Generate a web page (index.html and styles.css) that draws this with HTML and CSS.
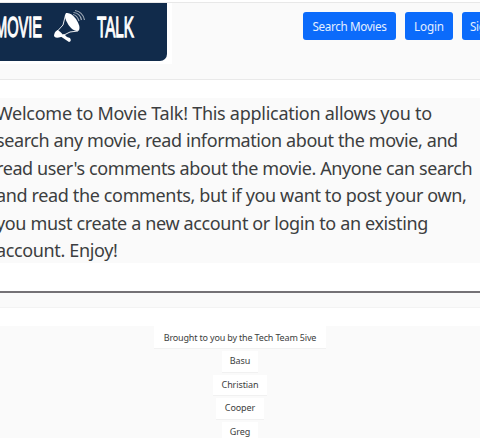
FILE: index.html
```html
<!DOCTYPE html>
<html lang="en">
<head>
<meta charset="utf-8">
<title>Movie Talk</title>
<link rel="stylesheet" href="styles.css">
</head>
<body>
<header class="header">
  <div class="logo">
    <svg class="logo-art" width="167" height="58" viewBox="0 0 167 58" role="img" aria-label="Movie Talk">
      <g class="logo-text">
        <text x="-5" y="34" textLength="47" lengthAdjust="spacingAndGlyphs">MOVIE</text>
        <text x="97" y="34" textLength="37" lengthAdjust="spacingAndGlyphs">TALK</text>
      </g>
      <g fill="#fff">
        <path d="M66 10Q71 9 76 16Q81 24 79 27.500Q74 29.500 68.500 22Q63 13 66 10Z"/>
        <path d="M57.500 27Q60 28 64 33L61 34Q55 36 54 33Q54 29 57.500 27Z"/>
        <path d="M60 33L64 31L67 34L70 35Q72 38 69 39L66 37Z"/>
      </g>
      <g fill="none" stroke="#fff">
        <path d="M65.500 12L63 22L57.500 28M78 28L70 29L62 33" stroke-width=".9"/>
        <path d="M73 11.500Q77 12 79 18M73.500 9.500Q80 10 81.500 17M75 7.500Q83 9 84.500 17" stroke-width="1.200" opacity=".6"/>
      </g>
    </svg>
  </div>
  <nav class="nav">
    <a class="btn btn-search">Search Movies</a>
    <a class="btn btn-login">Login</a>
    <a class="btn btn-signup">Sign Up</a>
  </nav>
</header>
<main class="intro">
  <p class="welcome">
    <span class="line">Welcome to Movie Talk! This application allows you to</span>
    <span class="line tight">search any movie, read information about the movie, and</span>
    <span class="line tight">read user's comments about the movie. Anyone can search</span>
    <span class="line snug">and read the comments, but if you want to post your own,</span>
    <span class="line snug">you must create a new account or login to an existing</span>
    <span class="line snug">account. Enjoy!</span>
  </p>
</main>
<div class="divider"></div>
<footer class="credits">
  <div class="credit team">Brought to you by the Tech Team 5ive</div>
  <div class="credit basu">Basu</div>
  <div class="credit christian">Christian</div>
  <div class="credit cooper">Cooper</div>
  <div class="credit greg">Greg</div>
</footer>
</body>
</html>
```
FILE: styles.css
```css
* { box-sizing: border-box; }
body {
  margin: 0;
  height: 438px;
  overflow: hidden;
  background: #fff;
  color: #3c3e40;
  font-family: "Noto Sans", "Open Sans", sans-serif;
}
.header {
  display: flex;
  justify-content: space-between;
  height: 78px;
  margin-top: 2px;
  overflow: hidden;
  border-top: 1px solid #e8e8e8;
  border-bottom: 1px solid #e9e9e9;
  background: #fafafa;
}
.logo {
  flex: none;
  width: 172px;
  height: 61px;
  background: #fff;
}
.logo-art {
  display: block;
  background: #112b4b;
  border-bottom-right-radius: 7px;
}
.logo-text {
  fill: #fff;
  stroke: #fff;
  stroke-width: 1.3px;
  font: 30px "Liberation Sans", sans-serif;
}
.nav {
  display: flex;
  flex: none;
  gap: 9px;
  width: 177px;
  padding-top: 9px;
}
.btn {
  flex: none;
  height: 28px;
  border-radius: 3px;
  background: #0b6bfb;
  color: #e4efff;
  font-size: 11.7px;
  line-height: 29px;
  letter-spacing: -.35px;
  text-align: center;
}
.btn-search { width: 93px; }
.btn-login { width: 48px; letter-spacing: -.15px; }
.btn-signup { width: 56px; }
.intro {
  height: 165px;
  margin-top: 18px;
  overflow: hidden;
  background: #fafafa;
}
.welcome {
  margin: 0 0 0 -4px;
  padding-top: 1.5px;
  font-size: 18px;
  letter-spacing: -.27px;
}
.line {
  display: block;
  height: 27.5px;
  line-height: 27.5px;
  white-space: nowrap;
}
.tight { letter-spacing: -.41px; }
.snug { letter-spacing: -.36px; }
.divider {
  height: 17px;
  margin-top: 28px;
  border-top: 2px solid #747276;
  border-bottom: 1px solid #f3f3f3;
  background: #fafafa;
}
.credits {
  display: flex;
  flex-direction: column;
  align-items: center;
  gap: 2px;
  height: 130px;
  margin-top: 18px;
  background: #fafafa;
}
.credit {
  flex: none;
  height: 21.5px;
  border-bottom: 1px solid #f1f1f1;
  background: #fff;
  font-size: 9px;
  line-height: 20px;
  letter-spacing: -.1px;
  text-align: center;
  white-space: nowrap;
}
.team { width: 172px; height: 23px; line-height: 23px; letter-spacing: -.17px; }
.basu { width: 36px; }
.christian { width: 54px; }
.cooper { width: 48px; }
.greg { width: 36px; }
```
